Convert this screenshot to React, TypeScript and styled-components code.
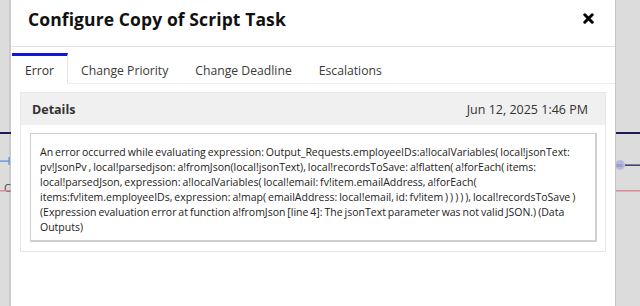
import React from 'react';
import styled, {createGlobalStyle} from "styled-components";

const GlobalStyle = createGlobalStyle`
    html, body {
        margin: 0;
        padding: 0;
    }
    body {
        font-family: "Open Sans", "Noto Sans", Arial, sans-serif;
        color: #222;
    }
`

const tabs = ['Error', 'Change Priority', 'Change Deadline', 'Escalations']

const message = 'An error occurred while evaluating expression: Output_Requests.employeeIDs:a!localVariables( local!jsonText: pv!JsonPv , local!parsedjson: a!fromJson(local!jsonText), local!recordsToSave: a!flatten( a!forEach( items: local!parsedJson, expression: a!localVariables( local!email: fv!item.emailAddress, a!forEach( items:fv!item.employeeIDs, expression: a!map( emailAddress: local!email, id: fv!item ) ) ) ) ), local!recordsToSave ) (Expression evaluation error at function a!fromJson [line 4]: The jsonText parameter was not valid JSON.) (Data Outputs)'

const Diagram = () => (
    <Backdrop width="640" height="306" viewBox="0 0 640 306">
        <rect x="9" y="0" width="2" height="306" fill="#cbcbcb"/>
        <rect x="0" y="132" width="11" height="2" fill="#1d1d5c"/>
        <rect x="0" y="160.5" width="9" height="1.2" fill="#4a8fd8"/>
        <rect x="8.5" y="157" width="1.2" height="8" fill="#4a8fd8"/>
        <text x="4" y="192" fontSize="11" fill="#444" fontFamily="Open Sans, sans-serif">C</text>
        <rect x="0" y="190" width="11" height="1.5" fill="#d98c9a"/>
        <rect x="616" y="132" width="24" height="2" fill="#1d1d5c"/>
        <circle cx="620" cy="165" r="5" fill="#b9b9de"/>
        <text x="616.5" y="167" fontSize="5" fill="#6a6aa0" fontFamily="Open Sans, sans-serif">oo</text>
        <rect x="625" y="164.5" width="15" height="1.3" fill="#1d1d5c"/>
        <rect x="616" y="190" width="24" height="1.5" fill="#d98c9a"/>
    </Backdrop>
)

export default function App() {
    return (
        <>
            <GlobalStyle/>
            <Page>
                <Diagram/>
                <Modal>
                    <Header>
                        <Title>Configure Copy of Script Task</Title>
                        <CloseButton aria-label="close">
                            <svg width="11" height="11" viewBox="0 0 11 11">
                                <path d="M1.8 1.8 L9.2 9.2 M9.2 1.8 L1.8 9.2" stroke="#000" strokeWidth="3" strokeLinecap="round"/>
                            </svg>
                        </CloseButton>
                    </Header>
                    <TabBar>
                        {tabs.map((t, i) => (
                            <Tab key={t} $active={i === 0}>{t}</Tab>
                        ))}
                        <TabFiller/>
                    </TabBar>
                    <Body>
                        <Section>
                            <SectionHeader>
                                <SectionTitle>Details</SectionTitle>
                                <Timestamp>Jun 12, 2025 1:46 PM</Timestamp>
                            </SectionHeader>
                            <SectionContent>
                                <MessageBox>{message}</MessageBox>
                            </SectionContent>
                        </Section>
                    </Body>
                </Modal>
            </Page>
        </>
    );
}

const Page = styled.div`
    position: relative;
    width: 640px;
    height: 306px;
    overflow: hidden;
    background: #dcdcdc;
`

const Backdrop = styled.svg`
    position: absolute;
    left: 0;
    top: 0;
`

const Modal = styled.div`
    position: absolute;
    left: 11px;
    top: 0;
    width: 604px;
    height: 320px;
    background: #fff;
    border-right: 1px solid #c6c6c6;
    display: flex;
    flex-direction: column;
`

const Header = styled.div`
    height: 46px;
    display: flex;
    align-items: center;
    justify-content: space-between;
    padding: 0 21px 0 17px;
    border-bottom: 1px solid #e2e2e2;
    box-sizing: content-box;
`

const Title = styled.h1`
    margin: 0;
    font-size: 17.5px;
    font-weight: 700;
    color: #111;
    letter-spacing: 0.1px;
    padding-bottom: 9px;
`

const CloseButton = styled.button`
    border: none;
    background: none;
    padding: 0;
    display: flex;
    margin-bottom: 9px;
`

const TabBar = styled.div`
    display: flex;
    margin-top: 6px;
    height: 31px;
`

const Tab = styled.div<{ $active?: boolean }>`
    display: flex;
    align-items: center;
    padding: 1px 13px 0;
    font-size: 12.2px;
    color: ${p => p.$active ? '#333' : '#3a3a3a'};
    border-top: 3px solid ${p => p.$active ? '#1414d6' : 'transparent'};
    border-right: 1px solid ${p => p.$active ? '#e6e6e6' : 'transparent'};
    border-bottom: 1px solid ${p => p.$active ? 'transparent' : '#ececec'};
    margin-left: ${p => p.$active ? '1px' : '0'};
`

const TabFiller = styled.div`
    flex: 1;
    border-bottom: 1px solid #ececec;
`

const Body = styled.div`
    padding: 8px 9px 0;
`

const Section = styled.div`
    border: 1px solid #e8e8e8;
`

const SectionHeader = styled.div`
    height: 32px;
    background: #f0f0f0;
    display: flex;
    align-items: center;
    justify-content: space-between;
    padding: 0 17px 0 11px;
`

const SectionTitle = styled.span`
    font-size: 12.5px;
    font-weight: 700;
    color: #333;
`

const Timestamp = styled.span`
    font-size: 12.5px;
    color: #333;
`

const SectionContent = styled.div`
    padding: 8px 8px 9px 9px;
`

const MessageBox = styled.div`
    border: 1px solid #cfcfcf;
    border-bottom-width: 2px;
    border-right-width: 2px;
    padding: 11px 10px 5px 9px;
    font-size: 10.5px;
    line-height: 15px;
    word-spacing: -0.8px;
    color: #222;
`
